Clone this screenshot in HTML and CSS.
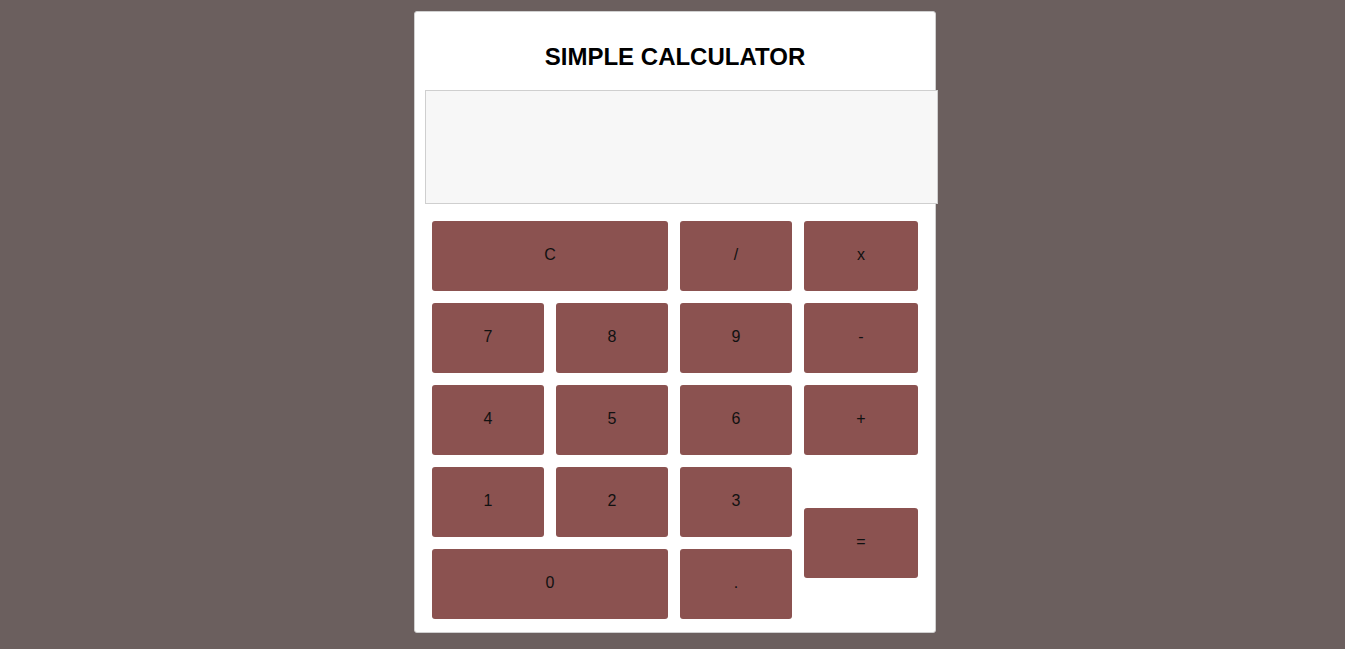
FILE: index.html
```html
<!DOCTYPE html>
<html>
<head>
<meta charset="utf-8">
<link rel="stylesheet" href="styles.css">
</head>
<body>
<div class="calculator">
  <h1 class="title">SIMPLE CALCULATOR</h1>
  <div class="display"></div>
  <div class="keys">
    <button class="key span2">C</button>
    <button class="key">/</button>
    <button class="key">x</button>
    <button class="key">7</button>
    <button class="key">8</button>
    <button class="key">9</button>
    <button class="key">-</button>
    <button class="key">4</button>
    <button class="key">5</button>
    <button class="key">6</button>
    <button class="key">+</button>
    <button class="key">1</button>
    <button class="key">2</button>
    <button class="key">3</button>
    <button class="key equals">=</button>
    <button class="key span2">0</button>
    <button class="key">.</button>
  </div>
</div>
</body>
</html>
```
FILE: styles.css
```css
html, body {
  margin: 0;
  padding: 0;
}
body {
  background: #6b5f5e;
  font-family: "Liberation Sans", Arial, sans-serif;
  min-height: 649px;
  padding: 11px 0 0 5px;
  box-sizing: border-box;
}
.calculator {
  width: 500px;
  margin: 0 auto;
  background: #fff;
  border: 1px solid #d0d0d0;
  border-radius: 3px;
  padding: 0 10px 13px 10px;
}
.title {
  margin: 0;
  padding: 31px 0 19px;
  font-size: 24px;
  line-height: 28px;
  font-weight: bold;
  text-align: center;
  color: #000;
}
.display {
  width: 511px;
  height: 112px;
  background: #f7f7f7;
  border: 1px solid #cfcfcf;
  margin-bottom: 17px;
}
.keys {
  display: grid;
  grid-template-columns: 112px 112px 112px 114px;
  grid-auto-rows: 70px;
  gap: 12px;
  padding-left: 7px;
}
.key {
  background: #8b5250;
  border: none;
  border-radius: 3px;
  color: #111;
  font-family: "Liberation Sans", Arial, sans-serif;
  font-size: 16px;
  padding: 0 0 2px;
}
.span2 {
  grid-column: span 2;
}
.equals {
  grid-column: 4;
  grid-row: 4 / span 2;
  height: 70px;
  align-self: center;
}
```
